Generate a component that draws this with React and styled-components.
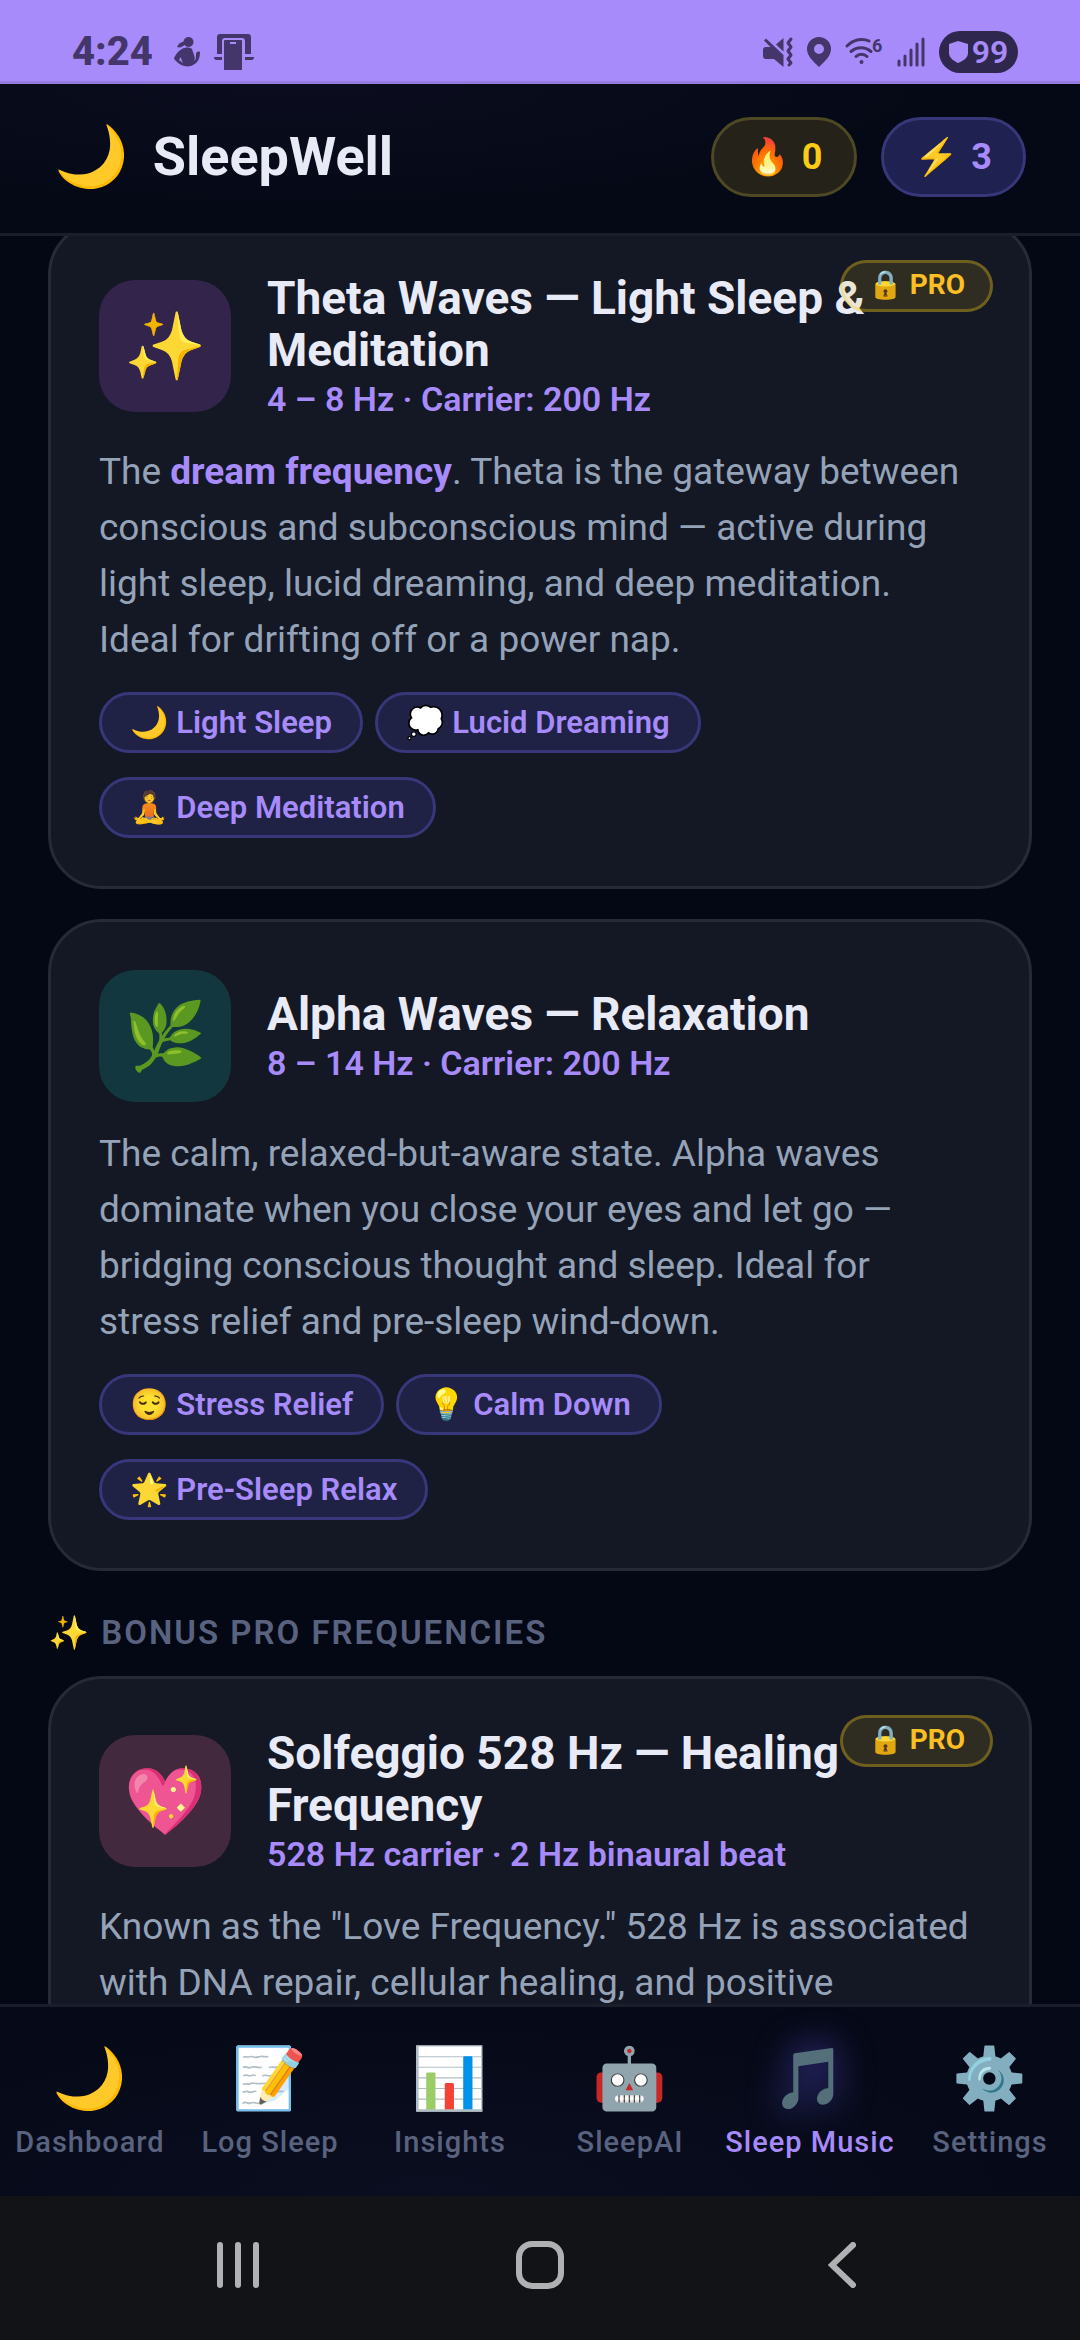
import React from "react";
import styled, { createGlobalStyle } from "styled-components";

const GlobalStyle = createGlobalStyle`
  *, *::before, *::after {
    box-sizing: border-box;
  }

  body {
    margin: 0;
    background: #040714;
    font-family: Roboto, "Noto Color Emoji", sans-serif;
    color: #e8eaf6;
  }

  h1, h2, h3, p, ul {
    margin: 0;
    padding: 0;
  }

  ul {
    list-style: none;
  }

  button {
    border: 0;
    padding: 0;
    background: none;
    font-family: inherit;
    cursor: pointer;
  }
`;

const Screen = styled.div`
  display: flex;
  flex-direction: column;
  height: 100vh;
  overflow: hidden;
`;

const StatusBar = styled.div`
  display: flex;
  flex-shrink: 0;
  align-items: center;
  justify-content: space-between;
  height: 81px;
  padding: 22px 62px 0 72px;
  background: #a78bfa;
  color: #44366b;
`;

const StatusGroup = styled.div`
  display: flex;
  align-items: center;
  gap: 14px;

  svg {
    display: block;
    flex-shrink: 0;
    overflow: visible;
  }
`;

const Clock = styled.time`
  margin-right: 7px;
  font-size: 40px;
  line-height: 42px;
  font-weight: 800;
`;

const Battery = styled.div`
  display: flex;
  align-items: center;
  justify-content: center;
  gap: 4px;
  width: 79px;
  height: 42px;
  border-radius: 21px;
  background: #30274f;
  color: #a78bfa;
  font-size: 32px;
  line-height: 42px;
  font-weight: 600;
`;

const Header = styled.header`
  display: flex;
  flex-shrink: 0;
  align-items: center;
  justify-content: space-between;
  padding: 33px 54px 36px;
  border-top: 3px solid #967ddf;
  border-bottom: 3px solid #1a1d2b;
  background: radial-gradient(ellipse at 28% 0, #0b0d1e, #050916 60%);
`;

const Brand = styled.div`
  display: flex;
  align-items: center;
  gap: 24px;
`;

const Logo = styled.span`
  font-size: 60px;
  line-height: 68px;
`;

const BrandName = styled.h1`
  font-size: 54px;
  line-height: 68px;
  font-weight: 700;
`;

const Pills = styled.div`
  display: flex;
  gap: 24px;
`;

const Pill = styled.div`
  display: flex;
  align-items: center;
  gap: 12px;
  height: 80px;
  padding: 0 31px;
  border: 3px solid ${(props) => (props.$gold ? "#4e4823" : "#37377a")};
  border-radius: 40px;
  background: ${(props) => (props.$gold ? "#252219" : "#1f2150")};
  color: ${(props) => (props.$gold ? "#facc15" : "#a78bfa")};
  font-size: 36px;
  font-weight: 700;
`;

const Content = styled.main`
  flex: 1;
  min-height: 0;
  overflow: hidden;
  padding: 0 48px;
`;

/* the list rests slightly scrolled under the header */
const Feed = styled.div`
  margin-top: -15px;
`;

const Card = styled.article`
  position: relative;
  margin-bottom: 30px;
  padding: 48px;
  border: 3px solid #262a36;
  border-radius: 54px;
  background: #141724;
`;

const CardHead = styled.div`
  display: flex;
  align-items: center;
  gap: 36px;
  margin-bottom: 24px;
`;

const CardIcon = styled.div`
  display: flex;
  flex-shrink: 0;
  align-items: center;
  justify-content: center;
  width: 132px;
  height: 132px;
  border-radius: 36px;
  background: ${(props) => props.$tint};
  font-size: 66px;
`;

const CardHeading = styled.div`
  padding-bottom: 2px;
`;

const CardTitle = styled.h3`
  margin-bottom: 5px;
  font-size: 46px;
  line-height: 52px;
  font-weight: 700;
`;

const CardFreq = styled.p`
  color: #a78bfa;
  font-size: 34px;
  line-height: 37px;
  font-weight: 600;
`;

const ProBadge = styled.span`
  position: absolute;
  top: 36px;
  right: 36px;
  height: 52px;
  padding: 0 25px;
  border: 3px solid rgba(250, 204, 21, 0.32);
  border-radius: 26px;
  background: rgba(250, 204, 21, 0.12);
  color: #fbbf24;
  font-size: 28px;
  line-height: 44px;
  font-weight: 700;
`;

const Description = styled.p`
  padding-right: 6px;
  color: #94a3b8;
  font-size: 37px;
  line-height: 56px;

  strong {
    color: #a78bfa;
    font-weight: 700;
  }
`;

const Tags = styled.ul`
  display: flex;
  flex-wrap: wrap;
  gap: 24px 12px;
  margin-top: 24px;
`;

const Tag = styled.li`
  padding: 9px 28px;
  border: 3px solid #37377a;
  border-radius: 31px;
  background: #1f2245;
  color: #a78bfa;
  font-size: 31px;
  line-height: 37px;
  font-weight: 600;
`;

const SectionTitle = styled.h2`
  margin: 42px 0 24px;
  color: #59627e;
  font-size: 33px;
  line-height: 39px;
  font-weight: 600;
  letter-spacing: 2px;
  text-transform: uppercase;
`;

const TabBar = styled.nav`
  display: grid;
  grid-template-columns: repeat(6, 1fr);
  flex-shrink: 0;
  height: 192px;
  border-top: 3px solid #1a1d2b;
  background: radial-gradient(ellipse at 40% 100%, #0a0e20, #060917 70%);
`;

const Tab = styled.button`
  display: flex;
  flex-direction: column;
  align-items: center;
  padding-top: 37px;
  color: ${(props) => (props.$active ? "#a78bfa" : "#59627e")};
  font-size: 29px;
  line-height: 34px;
  font-weight: 500;
  letter-spacing: 1px;
  white-space: nowrap;
`;

const TabIcon = styled.span`
  margin-bottom: 11px;
  font-size: 60px;
  line-height: 70px;
  letter-spacing: 0;
  filter: ${(props) =>
    props.$active ? "drop-shadow(0 0 18px rgba(99, 92, 246, 0.8))" : "none"};
`;

const SystemBar = styled.div`
  display: grid;
  grid-template-columns: repeat(3, 1fr);
  flex-shrink: 0;
  height: 144px;
  padding: 0 87px 6px;
  background: #121316;
  color: #b0b1b3;
`;

const SystemButton = styled.button`
  display: flex;
  align-items: center;
  justify-content: center;
  color: inherit;
`;

const FigureIcon = () => (
  <svg width="26" height="30" viewBox="0 0 26 30" fill="currentColor">
    <circle cx="14.5" cy="5" r="5" />
    <path d="M11 4C7 5 4 7 3 10c3 1 6 0 8-3z" />
    <path
      d="M8 12c3-2 8-2 10 0l2 6c1 2 1 4 0 6 2-1 2-4 2-7 0-2 2-3 4-2 0 6-2 11-7 13-5 3-12 1-16-3-2-2-3-3-3-4 2-4 4-7 8-9zm-1 8l-2 3 4 3c-1-2-2-4-2-6z"
      fillRule="evenodd"
    />
  </svg>
);

const PhoneLinkIcon = () => (
  <svg width="40" height="36" viewBox="0 0 40 36" fill="currentColor">
    <path d="M3 20V3a3 3 0 0 1 3-3h28a3 3 0 0 1 3 3v17h-6V7a3 3 0 0 0-3-3H11a3 3 0 0 0-3 3v13z" />
    <path d="M0 23h8v3H2c-1 0-2-1-2-3zM31 23h9c0 2-1 3-2 3h-7z" />
    <path
      d="M11 6h16a1 1 0 0 1 1 1v29H10V7a1 1 0 0 1 1-1zm5 2v2h6V8z"
      fillRule="evenodd"
    />
  </svg>
);

const MuteIcon = () => (
  <svg width="30" height="30" viewBox="0 0 30 30" fill="currentColor">
    <path d="M20.5 1v13.5L13 7.5z" />
    <path d="M3 1.5L20.5 18v12L11 22H3a3 3 0 0 1-3-3v-6a3 3 0 0 1 3-3h4.5L1 3.5z" />
    <path
      d="M28 2l-3 4 3 4-3 4 3 4-3 4 3 4-2 2"
      fill="none"
      stroke="currentColor"
      strokeWidth="3"
      strokeLinecap="round"
      strokeLinejoin="round"
    />
  </svg>
);

const PinIcon = () => (
  <svg width="24" height="30" viewBox="0 0 24 30" fill="currentColor">
    <path
      d="M12 0a12 12 0 0 1 12 12c0 7-6 12-12 18C6 24 0 19 0 12A12 12 0 0 1 12 0zm0 7a5 5 0 1 0 0 10 5 5 0 0 0 0-10z"
      fillRule="evenodd"
    />
  </svg>
);

const WifiIcon = () => (
  <svg
    width="38"
    height="30"
    viewBox="0 0 38 30"
    fill="none"
    stroke="currentColor"
    strokeWidth="3"
    strokeLinecap="round"
  >
    <path d="M2 9C9 2 18 1 24 4M6 14.5c6-5 14-5 20 0M11 19.500c3-3 8-3 11 0" />
    <circle cx="16.5" cy="25" r="2" fill="currentColor" stroke="none" />
    <text
      x="27"
      y="15"
      fill="currentColor"
      stroke="none"
      fontSize="18"
      fontWeight="700"
    >
      6
    </text>
  </svg>
);

const SignalIcon = () => (
  <svg
    width="28"
    height="30"
    viewBox="0 0 28 30"
    stroke="currentColor"
    strokeWidth="3"
    strokeLinecap="round"
  >
    <path d="M2 24v4M8 19v9M14 13v15M20 7v21M26 2v26" />
  </svg>
);

const ShieldIcon = () => (
  <svg width="19" height="22" viewBox="0 0 19 22" fill="currentColor">
    <path d="M9 0l10 3v9c0 5-5 8-10 10-4-2-9-5-9-10V3z" />
  </svg>
);

const cards = [
  {
    icon: "✨",
    tint: "#33244c",
    title: "Theta Waves — Light Sleep & Meditation",
    freq: "4 – 8 Hz · Carrier: 200 Hz",
    pro: true,
    text: (
      <>
        The <strong>dream frequency</strong>. Theta is the gateway between
        conscious and subconscious mind — active during light sleep, lucid
        dreaming, and deep meditation. Ideal for drifting off or a power nap.
      </>
    ),
    tags: ["🌙 Light Sleep", "💭 Lucid Dreaming", "🧘 Deep Meditation"],
  },
  {
    icon: "🌿",
    tint: "#13373e",
    title: "Alpha Waves — Relaxation",
    freq: "8 – 14 Hz · Carrier: 200 Hz",
    text: "The calm, relaxed-but-aware state. Alpha waves dominate when you close your eyes and let go — bridging conscious thought and sleep. Ideal for stress relief and pre-sleep wind-down.",
    tags: ["😌 Stress Relief", "💡 Calm Down", "🌟 Pre-Sleep Relax"],
  },
];

const bonusCard = {
  icon: "💖",
  tint: "#42293d",
  title: "Solfeggio 528 Hz — Healing Frequency",
  freq: "528 Hz carrier · 2 Hz binaural beat",
  pro: true,
  text: 'Known as the "Love Frequency." 528 Hz is associated with DNA repair, cellular healing, and positive',
};

const tabs = [
  { icon: "🌙", label: "Dashboard" },
  { icon: "📝", label: "Log Sleep" },
  { icon: "📊", label: "Insights" },
  { icon: "🤖", label: "SleepAI" },
  { icon: "🎵", label: "Sleep Music", active: true },
  { icon: "⚙️", label: "Settings" },
];

const WaveCard = ({ icon, tint, title, freq, pro, text, tags }) => {
  return (
    <Card>
      <CardHead>
        <CardIcon $tint={tint}>{icon}</CardIcon>
        <CardHeading>
          <CardTitle>{title}</CardTitle>
          <CardFreq>{freq}</CardFreq>
        </CardHeading>
      </CardHead>
      {pro && <ProBadge>🔒 PRO</ProBadge>}
      <Description>{text}</Description>
      {tags && (
        <Tags>
          {tags.map((tag) => (
            <Tag key={tag}>{tag}</Tag>
          ))}
        </Tags>
      )}
    </Card>
  );
};

const App = () => {
  return (
    <>
      <GlobalStyle />
      <Screen>
        <StatusBar>
          <StatusGroup>
            <Clock>4:24</Clock>
            <FigureIcon />
            <PhoneLinkIcon />
          </StatusGroup>
          <StatusGroup>
            <MuteIcon />
            <PinIcon />
            <WifiIcon />
            <SignalIcon />
            <Battery>
              <ShieldIcon />
              99
            </Battery>
          </StatusGroup>
        </StatusBar>
        <Header>
          <Brand>
            <Logo>🌙</Logo>
            <BrandName>SleepWell</BrandName>
          </Brand>
          <Pills>
            <Pill $gold>
              <span>🔥</span>0
            </Pill>
            <Pill>
              <span>⚡</span>3
            </Pill>
          </Pills>
        </Header>
        <Content>
          <Feed>
            {cards.map((card) => (
              <WaveCard key={card.title} {...card} />
            ))}
            <SectionTitle>✨ Bonus Pro Frequencies</SectionTitle>
            <WaveCard {...bonusCard} />
          </Feed>
        </Content>
        <TabBar>
          {tabs.map(({ icon, label, active }) => (
            <Tab
              key={label}
              type="button"
              $active={active}
              aria-current={active ? "page" : undefined}
            >
              <TabIcon $active={active}>{icon}</TabIcon>
              {label}
            </Tab>
          ))}
        </TabBar>
        <SystemBar>
          <SystemButton type="button" aria-label="Recent apps">
            <svg
              width="42"
              height="46"
              viewBox="0 0 42 46"
              stroke="currentColor"
              strokeWidth="6"
              strokeLinecap="round"
            >
              <path d="M3 3v40M21 3v40M39 3v40" />
            </svg>
          </SystemButton>
          <SystemButton type="button" aria-label="Home">
            <svg
              width="48"
              height="48"
              viewBox="0 0 48 48"
              fill="none"
              stroke="currentColor"
              strokeWidth="6"
            >
              <rect x="3" y="3" width="42" height="42" rx="13" />
            </svg>
          </SystemButton>
          <SystemButton type="button" aria-label="Back">
            <svg
              width="28"
              height="46"
              viewBox="0 0 28 46"
              fill="none"
              stroke="currentColor"
              strokeWidth="6"
              strokeLinecap="round"
            >
              <path d="M25 3L4 23l21 20" />
            </svg>
          </SystemButton>
        </SystemBar>
      </Screen>
    </>
  );
};

export default App;
